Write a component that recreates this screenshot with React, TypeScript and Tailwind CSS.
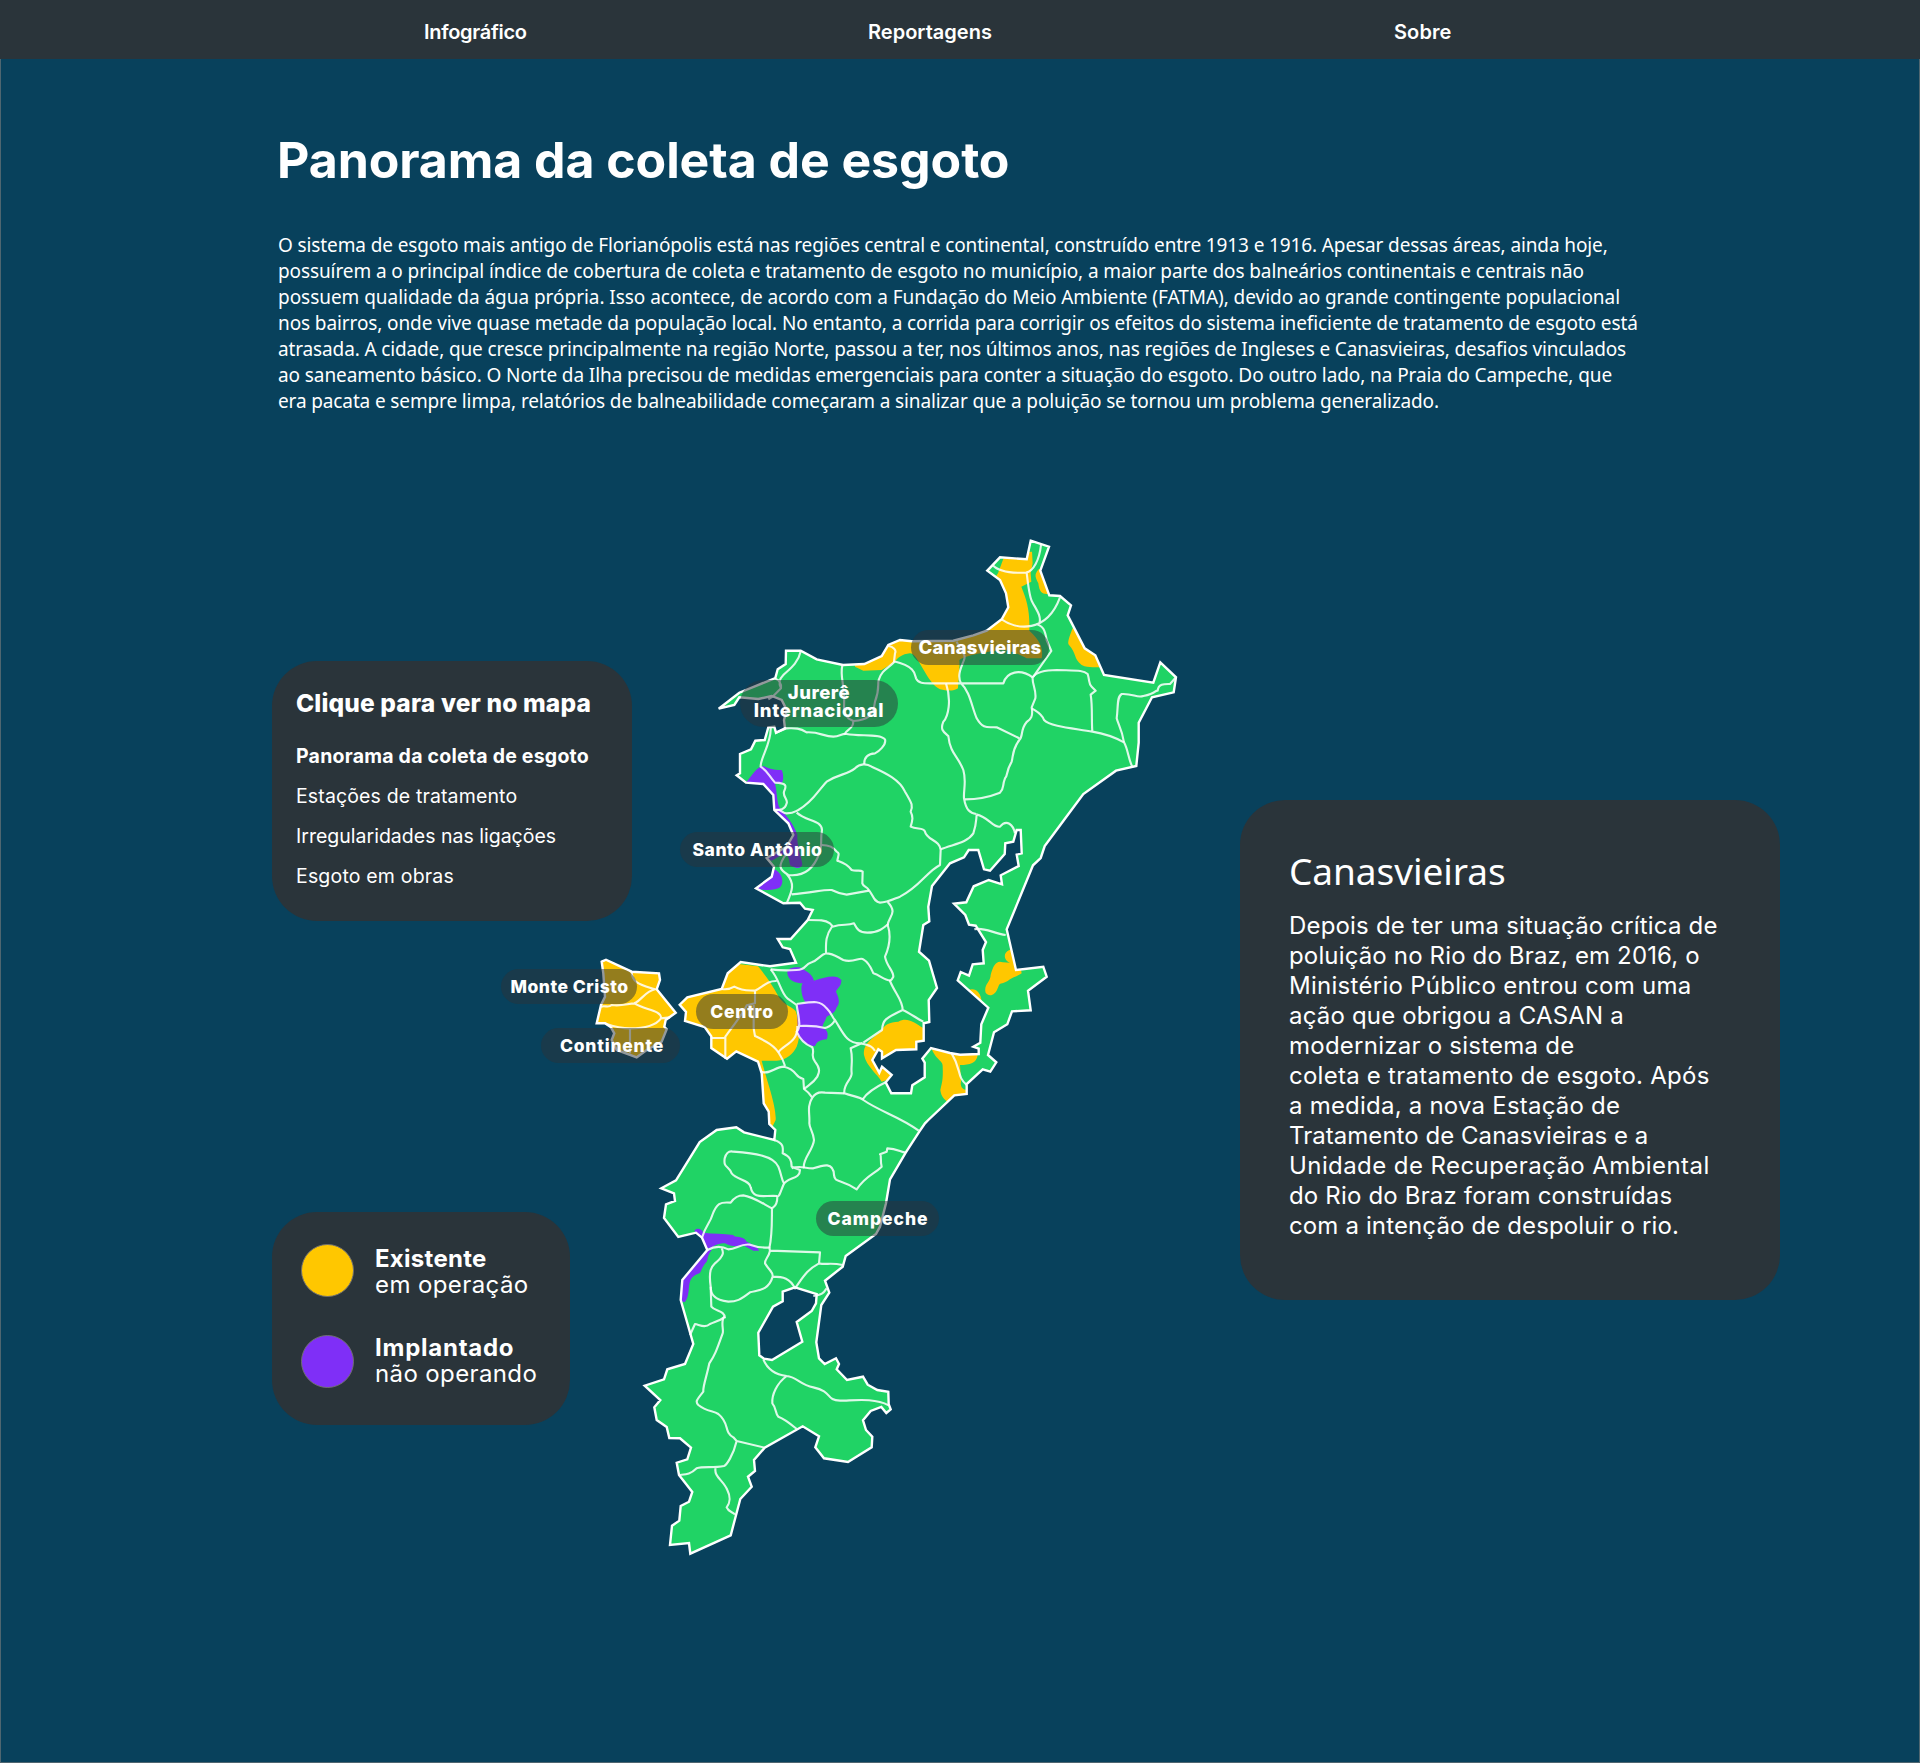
// Map sheets are drawn at three times the map's size; each has its own origin.
const SHEETS = {
  north: [860, 520],
  west: [640, 620],
  lagoon: [860, 780],
  centre: [580, 920],
  south: [640, 1100],
  tip: [620, 1280],
  mainland: [495, 940],
} as const;
type Sheet = keyof typeof SHEETS;

const trace = (parts: [Sheet, number[]][]) =>
  "M" +
  parts
    .flatMap(([sheet, n]) => {
      const [ox, oy] = SHEETS[sheet];
      const out: string[] = [];
      for (let i = 0; i < n.length; i += 2) out.push(`${(ox + n[i] / 3).toFixed(1)} ${(oy + n[i + 1] / 3).toFixed(1)}`);
      return out;
    })
    .join("L") +
  "Z";

const ISLAND = trace([
  ["north", [512,62,567,80,541,152,568,226,600,228,633,256,623,286,674,385,706,406,732,465,880,488,901,427,948,472,941,517,876,532,836,608,836,668,829,738,768,752,670,822,612,900]],
  ["lagoon", [554,198,542,234,519,256,440,448,468,570,550,560,560,590,504,632,512,691,456,694,442,733,402,757,384,825,409,847,391,875,368,868,320,912,320,942,283,946,205,1020]],
  ["south", [855,70,838,95,797,158,750,238,738,310,720,380,708,402,617,468,608,500,555,542,568,578,544,615,529,727,537,775]],
  ["tip", [614,252,648,235,657,252,650,268,681,300,729,290,743,314,772,330,805,335,806,373,812,388,799,399,784,381,752,393,729,421,738,450,757,470,755,502,684,546,612,535,586,502,597,469,548,439,434,503,402,540,405,573,384,590,395,620,361,657,332,766,211,821,207,789,150,795,156,737,178,722,182,678,207,665,217,636,177,585,170,548,202,538,213,503,180,475,148,474,140,441,110,420,103,382,121,360,74,317,132,298,142,268,195,252,220,192,182,60]],
  ["south", [127,540,202,450,186,413,168,398,115,411,72,354,78,313,105,303,102,280,64,265,108,241,179,126,230,90,289,82,312,97,403,120,406,90,388,72]],
  ["centre", [566,575,551,550,545,460,534,425,469,394,441,416,394,384,394,349,374,321,315,303,318,276,299,254,322,232,425,207,443,160,482,126,570,139,648,128,630,87,608,82,593,57,632,57,683,0]],
  ["west", [518,870,495,866,480,848,430,850,348,805,395,770,402,740,380,714,440,680,460,645,445,610,403,570,400,525,370,492,318,488,290,466,300,460,300,402,333,388,346,362,374,360,385,322,403,320,408,338,435,325,432,300,440,270,425,240,395,228,355,237,298,232,283,255,236,266,298,218,406,174,413,148,437,132,438,92,482,92,530,118,609,135,673,132,725,108,745,75,780,60,815,64,940,62,1000,46]],
  ["north", [380,332,425,298,445,262,438,220,420,180,382,152,420,112,500,118]],
]);
const LAGOON = trace([["lagoon", [355,210,372,268,390,272,434,222,436,190,460,185,470,150,482,150,485,220,470,224,476,258,422,286,426,313,386,300,341,319,319,367,282,371,316,405,327,434,347,437,378,486,368,510,371,550,338,553,327,587,302,576,293,601,385,683,364,733,361,788,340,800,356,806,356,822,300,824,270,819,213,804,187,836,194,848,194,892,157,916,153,940,94,940,77,907,95,885,66,860,58,878,37,840,55,808,66,815,66,835,108,810,169,808,169,785,191,782,191,730,208,726,206,660,231,624,207,542,177,515,190,435,208,424,205,380,216,318,270,250,312,232,326,210]]]);
const PERI = trace([["tip", [525,22,590,42,588,70,575,93,530,126,547,185,456,240,432,236,418,226,415,158,459,80,488,64,488,35]]]);
const MAINLAND = trace([["mainland", [320,65,333,59,410,95,492,100,495,120,485,148,542,218,512,240,508,260,515,268,500,305,455,330,425,352,365,330,350,300,358,280,348,262,330,250,305,250,318,195,330,170,325,100]]]);

const YELLOW: [Sheet, string][] = [
  ["north", "M436 100L516 95L518 130L512 160L514 185L484 200C500 240 510 270 508 332C550 370 548 395 545 415L500 415C470 400 450 390 420 390C350 400 310 410 298 420C300 450 295 480 294 505C280 515 260 512 240 508C200 490 175 400 150 400C125 403 115 412 105 425L65 450L10 452L-15 440L-15 400L300 300L440 260L400 180L414 160Z"],
  ["north", "M536 148C520 165 528 175 535 190C538 215 545 222 560 222L590 222L560 140Z"],
  ["north", "M638 325C630 345 620 370 627 375C650 400 640 415 665 435C685 445 700 440 725 442L760 440L660 320Z"],
  ["lagoon", "M448 510C425 520 435 545 450 548L428 547C410 540 400 555 392 585C392 605 370 615 377 638C385 650 405 650 415 620C420 605 430 615 450 598C460 590 470 590 485 580L470 500Z"],
  ["lagoon", "M325 630C345 622 362 635 365 665L340 660Z"],
  ["lagoon", "M213 800C225 840 250 840 248 860C250 900 245 910 241 930C243 950 255 960 262 965L325 950L322 930C305 930 300 915 303 905L300 855C330 855 350 850 353 825L300 824Z"],
  ["lagoon", "M191 745C160 725 140 710 115 725C90 725 70 735 62 755C20 785 10 800 12 825C20 860 50 880 65 905L110 890L60 840L200 810Z"],
  ["centre", "M534 139C560 170 580 200 590 220C610 260 640 260 648 275C655 300 665 340 650 380C640 400 620 420 590 422L545 422C560 480 590 560 587 600L575 625L540 620L200 420L200 100Z"],
];
const PURPLE: [Sheet, string][] = [
  ["centre", "M622 160C620 145 640 140 660 142C680 155 695 160 702 182C740 170 770 162 784 180C785 200 770 205 768 215C778 235 780 250 770 262C765 280 750 285 740 290C735 305 725 315 728 325C745 330 745 345 740 358C720 360 710 365 705 378C690 380 660 365 652 345C655 310 650 280 652 252L678 248C665 235 660 200 668 190C650 190 625 185 622 160Z"],
  ["west", "M285 465L320 485C340 460 350 442 370 438C385 445 395 450 425 450C432 465 430 485 425 490L405 490C412 520 410 550 420 565C440 590 460 610 472 645C470 680 485 710 487 735C480 748 465 745 450 735C445 700 440 700 425 705L395 722L378 712L450 660L400 590L380 500L290 500Z"],
  ["west", "M402 748C430 760 432 790 420 802C405 812 380 810 350 808L380 760Z"],
  ["south", "M163 392C170 382 185 385 190 398C220 402 250 400 280 405C282 415 310 405 320 425C345 435 355 445 357 452L340 452L312 437C290 440 270 440 255 430C240 430 220 435 215 445L195 445L180 415Z"],
  ["south", "M215 450C200 470 205 475 200 485C185 500 185 515 178 520C150 530 150 545 147 560C145 590 140 600 133 607L115 600L120 530L190 450Z"],
];
const BORDERS: [Sheet, string][] = [
  ["north", "M543 75C538 120 520 155 498 158C450 160 415 155 398 135M500 158C505 200 508 235 518 248C530 270 545 290 538 310M425 298C470 330 560 340 600 232M528 312C550 318 555 330 560 360L574 393L520 470"],
  ["north", "M85 378C100 380 110 390 105 400L102 424C165 440 165 460 168 475C175 490 190 490 210 490L430 490C440 455 480 445 518 472M290 365C300 395 320 400 312 420C305 440 290 465 303 490C330 515 335 560 350 595C370 630 385 620 410 622L478 655"],
  ["north", "M258 490C275 540 265 590 250 605C240 630 250 635 265 648C270 700 295 710 310 750C320 785 310 810 312 835C318 870 330 880 349 882"],
  ["north", "M518 470C515 490 530 510 526 535L515 562C520 590 512 598 500 606C480 630 490 650 478 660C455 690 460 710 455 725C435 760 445 765 435 775C425 800 435 800 420 818C390 830 350 838 315 838"],
  ["north", "M518 472C530 455 555 450 590 450C650 452 670 450 683 462C690 485 685 490 695 500L707 512L692 524C698 560 694 600 697 635M515 565C530 575 545 580 552 600C570 620 640 625 697 635C740 642 770 655 792 667C805 690 805 720 818 742"],
  ["north", "M792 667C785 625 775 615 770 595C775 560 770 530 785 522C820 520 830 535 850 528C890 520 885 510 893 512C895 490 915 492 930 492L948 472"],
  ["west", "M482 94C475 130 445 150 430 165C420 175 415 190 423 205L400 228L385 238M406 176C420 180 424 190 423 205M607 136C600 170 612 190 610 215C620 250 600 270 625 295L640 303C680 300 700 290 705 245C720 205 712 195 716 180C725 150 745 145 765 124M640 303C640 330 620 325 613 344"],
  ["west", "M408 338L440 325C460 325 475 322 500 337C540 335 550 350 580 350C600 350 605 340 620 342C660 350 720 340 735 358C740 375 715 395 705 400C680 402 672 415 673 432M392 322C395 370 360 415 362 440C385 455 385 465 405 488C445 490 438 500 432 515C428 530 445 540 440 550C435 570 420 570 403 570"],
  ["west", "M403 570C425 565 425 580 440 580C460 580 465 575 475 570C520 545 535 510 560 485C600 460 620 465 645 445C660 430 680 430 695 440C740 460 780 480 795 515C815 550 820 555 812 575C820 590 818 600 812 620C830 630 850 620 855 635C860 660 900 660 902 690L900 735C860 755 840 800 780 830C755 840 740 848 720 848C700 845 700 825 685 808C680 800 670 800 667 790L668 755C660 748 650 755 635 750C620 730 600 725 592 722C595 705 600 700 590 695C580 680 560 675 545 675"],
  ["west", "M470 578C500 605 545 600 546 630C540 660 548 680 538 700C520 750 490 770 445 765C420 750 410 740 440 700M440 762C465 790 458 810 440 850M455 823C520 818 550 808 575 810C595 820 600 822 620 824L687 812M902 688C940 672 980 670 1000 640C1010 610 1008 600 1010 585"],
  ["lagoon", "M349 103C385 110 400 145 420 140C440 115 460 135 465 160M343 448C370 440 400 460 437 465M83 366C115 400 85 410 83 435C95 470 88 500 75 530C80 560 100 570 100 590C95 600 95 600 90 603C105 640 128 660 128 690C150 700 170 715 190 725M128 690C75 715 68 720 66 750L10 788M77 907C50 920 20 940 8 958M275 820C305 870 290 890 320 915"],
  ["centre", "M683 0C720 0 735 0 750 10L757 18C735 50 738 70 738 100C720 105 715 120 695 127C670 135 680 150 650 150C620 152 600 152 572 148M757 20C790 10 800 18 822 10C830 25 835 38 862 38C895 38 910 25 925 12M738 100C760 100 770 110 790 120C820 130 840 110 850 118C870 130 875 150 880 160C900 165 910 180 932 182"],
  ["centre", "M572 148C600 180 600 215 622 235L650 255M425 207C445 210 455 205 463 200C490 215 510 210 525 212C550 200 560 182 590 183M525 212L525 250L500 256C490 280 450 330 436 350L436 416M521 255L521 325L525 348C550 360 585 375 600 405C610 420 612 430 615 438M394 354L436 354"],
  ["centre", "M650 252C700 245 720 240 740 265C755 280 755 290 765 300C755 320 745 320 735 324C700 315 680 318 657 318M650 255C655 290 665 320 650 335C660 360 680 375 697 382C705 400 690 405 705 425C725 450 715 460 712 470C700 490 685 495 672 507M765 300C790 340 800 370 840 370C875 375 880 385 885 393M848 368L812 385C820 420 812 440 815 460C815 480 790 490 793 520C820 530 840 530 850 540C900 575 960 590 1016 632"],
  ["centre", "M545 455C570 465 585 440 612 440C655 450 640 470 670 477L672 507C690 520 690 525 697 533C680 560 690 580 688 610C688 625 700 635 702 660C700 690 665 720 672 745M595 398C605 375 655 370 652 318M697 533C705 520 720 515 735 518L793 520"],
  ["south", "M403 120C430 130 430 140 428 160C450 170 455 180 455 200L480 210C480 240 440 230 430 255C420 280 418 290 412 290C412 320 400 320 396 325C395 350 398 400 388 445M455 205C480 195 490 205 520 205C550 195 580 185 582 225C585 250 600 235 650 268C680 225 700 225 725 200C720 180 725 165 720 163L740 155L742 145C770 145 780 155 797 158"],
  ["south", "M412 288C370 285 340 300 332 262C330 240 290 240 275 220C265 195 250 205 254 175C260 155 268 152 280 155C340 160 400 165 415 200C425 225 425 240 432 250M186 413C200 370 210 370 217 345C230 310 240 305 272 308C285 290 295 286 310 286C340 290 370 312 396 325"],
  ["south", "M202 450C220 440 240 435 265 448C290 448 300 430 330 434C360 445 365 442 388 443L390 452L540 457L537 490C560 495 570 487 608 495M537 490C500 510 490 530 465 565C450 535 430 530 398 530M390 452C385 475 375 475 375 490C390 515 400 515 398 530C385 575 350 570 330 577C300 600 290 605 265 605C220 600 212 580 212 560C205 510 215 500 225 490C255 465 250 455 245 445"],
  ["south", "M212 560L214 620C225 635 255 630 255 655M150 705L165 672C180 675 195 685 210 672C225 665 240 662 252 652M520 588C545 585 550 580 560 565"],
  ["tip", "M314 110C300 120 312 150 308 160C290 210 285 225 268 250C260 290 248 320 250 335C230 360 225 365 235 375C260 395 280 392 295 402C330 430 310 455 340 472L350 483L434 503M350 483C340 525 320 555 312 558C280 565 250 558 230 565C210 585 195 583 177 585M287 562C280 590 310 600 322 630C332 650 330 670 320 682C325 695 335 695 345 703"],
  ["tip", "M430 238C445 275 475 285 500 288C530 290 540 315 580 322C640 335 615 360 660 362C700 362 760 352 806 376M500 288C470 310 455 345 457 370C470 385 465 400 475 410C500 420 515 435 530 447"],
  ["mainland", "M318 200C330 195 340 205 350 195C380 200 400 190 418 190C450 210 500 210 498 235C480 260 440 265 405 265C370 265 345 255 330 250M410 95C410 130 440 135 480 148C450 155 440 180 418 190M498 235L525 232M405 265L405 340"],
];

function Shapes({ items }: { items: [Sheet, string][] }) {
  return (
    <>
      {items.map(([sheet, d], i) => (
        <path key={i} d={d} transform={`translate(${SHEETS[sheet][0]} ${SHEETS[sheet][1]}) scale(${1 / 3})`} />
      ))}
    </>
  );
}

function IslandMap() {
  return (
    <svg className="block h-[1030px] w-[679px]" viewBox="501 530 679 1030">
      <clipPath id="land">
        <path d={ISLAND + LAGOON + PERI} clipRule="evenodd" />
      </clipPath>
      <path d={ISLAND + LAGOON + PERI} fill="#20d365" fillRule="evenodd" />
      <g clipPath="url(#land)">
        <g fill="#ffc700"><Shapes items={YELLOW} /></g>
        <g fill="#7f2ff7"><Shapes items={PURPLE} /></g>
      </g>
      <path d={MAINLAND} fill="#ffc700" />
      <g fill="none" stroke="#ffffff" strokeOpacity={0.85} strokeWidth={6.4} strokeLinejoin="round"><Shapes items={BORDERS} /></g>
      <path d={ISLAND + LAGOON + PERI + MAINLAND} fill="none" stroke="#ffffff" strokeWidth={2.4} />
    </svg>
  );
}

// Each line carries its own tracking class.
type Line = [string, string];

function Lines({ lines }: { lines: Line[] }) {
  return (
    <>
      {lines.map(([text, tracking]) => (
        <div key={text} className={`whitespace-nowrap ${tracking}`}>{text}</div>
      ))}
    </>
  );
}

const LABELS: { box: string; lines: Line[] }[] = [
  { box: "left-[410px] top-[100px] h-[35px] w-[138px] text-[18.5px]", lines: [["Canasvieiras", "tracking-[0.27px]"]] },
  { box: "left-[239px] top-[150px] h-[47px] w-[158px] pb-[6px] text-[18.5px] leading-[18px]", lines: [["Jurerê", "tracking-[0.516px]"], ["Internacional", "tracking-[0.724px]"]] },
  { box: "left-[179px] top-[302px] h-[35px] w-[154px] pt-[2px] pl-px text-[17.5px]", lines: [["Santo Antônio", "tracking-[0.54px]"]] },
  { box: "left-0 top-[439px] h-[35px] w-[136px] pt-[2px] pl-px text-[17.5px]", lines: [["Monte Cristo", "tracking-[0.493px]"]] },
  { box: "left-[40px] top-[498px] h-[35px] w-[139px] pt-[2px] pl-[3px] text-[17.5px]", lines: [["Continente", "tracking-[0.762px]"]] },
  { box: "left-[195px] top-[464px] h-[35px] w-[92px] pt-[2px] text-[17.5px]", lines: [["Centro", "tracking-[0.745px]"]] },
  { box: "left-[315px] top-[671px] h-[35px] w-[123px] pt-px pl-px text-[17.5px]", lines: [["Campeche", "tracking-[0.967px]"]] },
];

const INTRO: Line[] = [
  ["O sistema de esgoto mais antigo de Florianópolis está nas regiões central e continental, construído entre 1913 e 1916. Apesar dessas áreas, ainda hoje,", "tracking-[-0.118px]"],
  ["possuírem a o principal índice de cobertura de coleta e tratamento de esgoto no município, a maior parte dos balneários continentais e centrais não", "tracking-[-0.1px]"],
  ["possuem qualidade da água própria. Isso acontece, de acordo com a Fundação do Meio Ambiente (FATMA), devido ao grande contingente populacional", "tracking-[-0.043px]"],
  ["nos bairros, onde vive quase metade da população local. No entanto, a corrida para corrigir os efeitos do sistema ineficiente de tratamento de esgoto está", "tracking-[-0.106px]"],
  ["atrasada. A cidade, que cresce principalmente na região Norte, passou a ter, nos últimos anos, nas regiões de Ingleses e Canasvieiras, desafios vinculados", "tracking-[-0.136px]"],
  ["ao saneamento básico. O Norte da Ilha precisou de medidas emergenciais para conter a situação do esgoto. Do outro lado, na Praia do Campeche, que", "tracking-[-0.09px]"],
  ["era pacata e sempre limpa, relatórios de balneabilidade começaram a sinalizar que a poluição se tornou um problema generalizado.", "tracking-[-0.128px]"],
];
const BODY: Line[] = [
  ["Depois de ter uma situação crítica de", "tracking-[0.18px]"],
  ["poluição no Rio do Braz, em 2016, o", "tracking-[0.15px]"],
  ["Ministério Público entrou com uma", "tracking-[0.28px]"],
  ["ação que obrigou a CASAN a", "tracking-[0.18px]"],
  ["modernizar o sistema de", "tracking-[0.24px]"],
  ["coleta e tratamento de esgoto. Após", "tracking-[0.25px]"],
  ["a medida, a nova Estação de", "tracking-[0.22px]"],
  ["Tratamento de Canasvieiras e a", "tracking-[0.04px]"],
  ["Unidade de Recuperação Ambiental", "tracking-[0.42px]"],
  ["do Rio do Braz foram construídas", "tracking-[0.17px]"],
  ["com a intenção de despoluir o rio.", "tracking-[0.13px]"],
];
const MENU: Line[] = [
  ["Estações de tratamento", "tracking-[0.14px]"],
  ["Irregularidades nas ligações", "tracking-[0.01px]"],
  ["Esgoto em obras", "tracking-[0.18px]"],
];

export default function App() {
  return (
    <div className="flex h-[1763px] w-[1920px] flex-col overflow-hidden bg-[#08415c] font-['Inter',sans-serif] text-white">
      <header className="flex h-[59px] items-center bg-[#2a343a] pt-1 pl-[424px] text-[20px] font-semibold">
        <nav className="flex">
          <a className="w-[444px] tracking-[-0.3px]">Infográfico</a>
          <a className="w-[526px] tracking-[0.01px]">Reportagens</a>
          <a className="tracking-[0.1px]">Sobre</a>
        </nav>
      </header>
      <main className="flex grow flex-col border border-t-0 border-[#4f6670] pt-[71px]">
        <h1 className="pl-[276px] text-[50px] leading-[60px] font-bold tracking-[-0.08px]">Panorama da coleta de esgoto</h1>
        <div className="mt-[42px] pl-[277px] font-['Noto_Sans',sans-serif] text-[19px] leading-[26px]">
          <Lines lines={INTRO} />
        </div>
        <section className="mt-[116px] ml-[271px] grid grid-cols-[229px_131px_608px_540px] items-start">
          <div className="relative col-start-2 col-end-4 row-start-1 w-[679px]">
            <IslandMap />
            {LABELS.map((l) => (
              <div key={l.box} className={`absolute flex flex-col items-center justify-center rounded-[24px] bg-[#2a343a]/50 font-extrabold ${l.box}`}>
                <Lines lines={l.lines} />
              </div>
            ))}
          </div>
          <aside className="col-start-1 col-end-3 row-start-1">
            <div className="mt-[131px] h-[260px] w-[360px] rounded-[45px] bg-[#2a343a] pt-[27px] pl-[24px]">
              <h2 className="text-[24.5px] leading-[30px] font-extrabold tracking-[0.14px]">Clique para ver no mapa</h2>
              <div className="mt-[18px] text-[19.5px] leading-[40px]">
                <div className="font-bold tracking-[0.23px]">Panorama da coleta de esgoto</div>
                <Lines lines={MENU} />
              </div>
            </div>
            <div className="mt-[291px] flex h-[213px] w-[298px] flex-col gap-[37px] rounded-[45px] bg-[#2a343a] pt-8 pl-[29px] text-[24px] leading-[26px]">
              <div className="flex h-[52px] items-center gap-[21px]">
                <div className="size-[53px] rounded-full border border-[#707070] bg-[#ffc700]" />
                <div className="pt-[3px]">
                  <div className="font-bold tracking-[0.28px]">Existente</div>
                  <div className="tracking-[0.4px]">em operação</div>
                </div>
              </div>
              <div className="flex h-[52px] items-center gap-[21px]">
                <div className="mt-[4px] size-[53px] rounded-full border border-[#707070] bg-[#7f2ff7]" />
                <div className="pt-[3px]">
                  <div className="font-bold tracking-[0.75px]">Implantado</div>
                  <div className="tracking-[0.38px]">não operando</div>
                </div>
              </div>
            </div>
          </aside>
          <article className="col-start-4 row-start-1 mt-[270px] h-[500px] rounded-[45px] bg-[#2a343a] pt-[47px] pl-[49px]">
            <h2 className="font-['Noto_Sans',sans-serif] text-[37px] leading-[48px] tracking-[-0.05px]">Canasvieiras</h2>
            <div className="mt-4 text-[24px] leading-[30px]">
              <Lines lines={BODY} />
            </div>
          </article>
        </section>
      </main>
    </div>
  );
}
